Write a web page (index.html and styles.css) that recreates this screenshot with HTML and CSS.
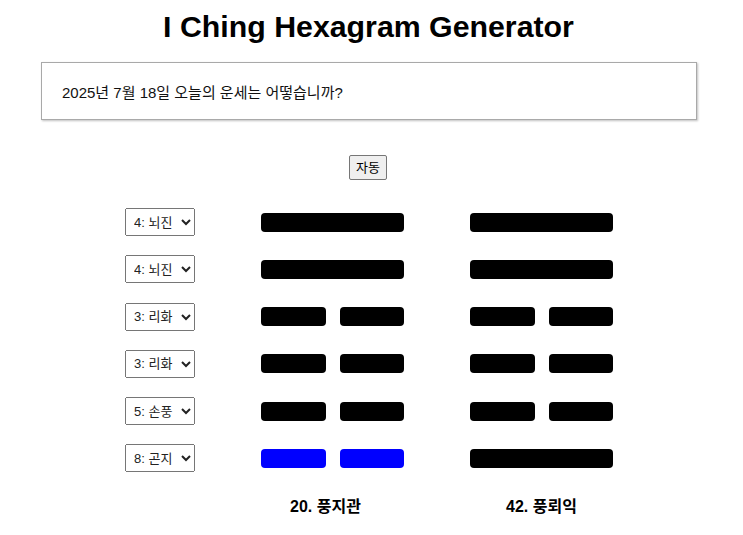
FILE: index.html
```html
<!DOCTYPE html>
<html>
<head>
  <meta charset="utf-8">
  <title>I Ching Hexagram Generator</title>
  <link rel="stylesheet" href="styles.css">
</head>
<body>
  <h1>I Ching Hexagram Generator</h1>

  <!-- Question -->
  <div class="question">2025년 7월 18일 오늘의 운세는 어떻습니까?</div>

  <div class="controls">
    <button type="button" class="auto-btn">자동</button>
  </div>

  <!-- Lines: select, primary hexagram, changed hexagram -->
  <div class="board">
    <select class="trigram"><option>4: 뇌진</option></select>
    <div class="line yang"></div>
    <div class="line yang"></div>

    <select class="trigram"><option>4: 뇌진</option></select>
    <div class="line yang"></div>
    <div class="line yang"></div>

    <select class="trigram"><option>3: 리화</option></select>
    <div class="line yin"><span></span><span></span></div>
    <div class="line yin"><span></span><span></span></div>

    <select class="trigram"><option>3: 리화</option></select>
    <div class="line yin"><span></span><span></span></div>
    <div class="line yin"><span></span><span></span></div>

    <select class="trigram"><option>5: 손풍</option></select>
    <div class="line yin"><span></span><span></span></div>
    <div class="line yin"><span></span><span></span></div>

    <select class="trigram"><option>8: 곤지</option></select>
    <div class="line yin moving"><span></span><span></span></div>
    <div class="line yang"></div>

    <div></div>
    <div class="hex-name first">20. 풍지관</div>
    <div class="hex-name">42. 풍뢰익</div>
  </div>
</body>
</html>
```

FILE: styles.css
```css
html, body {
  margin: 0;
  padding: 0;
}

body {
  background-color: #fff;
  color: #000;
  font-family: "Liberation Sans", "Noto Sans CJK KR", sans-serif;
}

h1 {
  margin: 10px 0 0;
  font-size: 30.3px;
  line-height: 34px;
  text-align: center;
  padding-right: 6px;
}

/* Question box */
.question {
  box-sizing: border-box;
  width: 656px;
  height: 58px;
  margin: 18px 0 0 41px;
  padding: 0 20px;
  display: flex;
  align-items: center;
  border: 1px solid #a9a9a9;
  box-shadow: 1px 1px 2px rgba(0, 0, 0, 0.25);
  font-size: 15px;
  color: #111;
}

.controls {
  margin-top: 35px;
  padding-right: 7px;
  text-align: center;
}

.auto-btn {
  font-family: inherit;
  font-size: 13px;
  line-height: 17px;
  padding: 3px 6px;
  color: #000;
  background-color: #efefef;
  border: 1px solid #767676;
  border-radius: 2px;
}

/* Hexagram grid */
.board {
  display: grid;
  grid-template-columns: 70px 143px 143px;
  grid-template-rows: repeat(6, 28px) auto;
  column-gap: 66px;
  row-gap: 19.26px;
  align-items: center;
  margin: 28px 0 0 125px;
}

.trigram {
  width: 70px;
  height: 28px;
  padding-left: 4px;
  font-family: inherit;
  font-size: 13px;
  color: #222;
}

.line {
  height: 19px;
  display: flex;
  justify-content: space-between;
}

.line.yang {
  background-color: #000;
  border-radius: 4px;
}

.line.yin span {
  width: 64.5px;
  background-color: #000;
  border-radius: 4px;
}

.line.moving span {
  background-color: #0000ff;
}

.hex-name {
  margin-top: 1px;
  font-size: 16px;
  font-weight: bold;
  text-align: center;
}

.hex-name.first {
  padding-right: 14px;
}
```
